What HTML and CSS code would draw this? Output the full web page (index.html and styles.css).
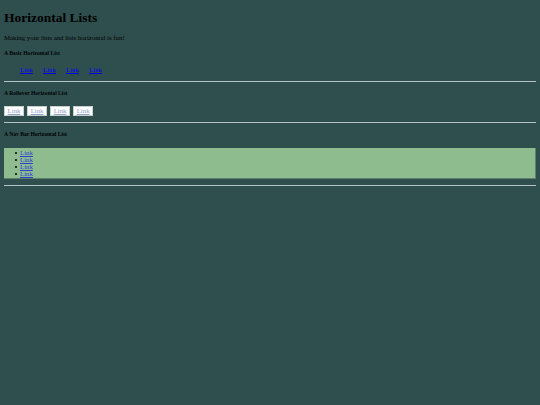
FILE: index.html
```html
<!DOCTYPE html>
<html>
<head>
<meta charset="utf-8">
<link rel="stylesheet" href="styles.css">
</head>
<body>
<div class="page">
  <h1 class="title">Horizontal Lists</h1>
  <p class="intro">Making your lists and lists horizontal is fun!</p>
  <h6 class="sub">A Basic Horizontal List</h6>
  <ul class="basic">
    <li><a href="#">Link</a></li>
    <li><a href="#">Link</a></li>
    <li><a href="#">Link</a></li>
    <li><a href="#">Link</a></li>
  </ul>
  <hr class="rule">
  <h6 class="sub">A Rollover Horizontal List</h6>
  <ul class="rollover">
    <li><a href="#">Link</a></li>
    <li><a href="#">Link</a></li>
    <li><a href="#">Link</a></li>
    <li><a href="#">Link</a></li>
  </ul>
  <hr class="rule rule-tight">
  <h6 class="sub">A Nav Bar Horizontal List</h6>
  <ul class="navbar">
    <li><a href="#">Link</a></li>
    <li><a href="#">Link</a></li>
    <li><a href="#">Link</a></li>
    <li><a href="#">Link</a></li>
  </ul>
  <hr class="rule rule-tight">
</div>
</body>
</html>
```

FILE: styles.css
```css
html, body {
  margin: 0;
  padding: 0;
  background: #2f4f4f;
}
body {
  font-family: "Liberation Serif", "Times New Roman", serif;
  color: #000;
}
.page {
  padding: 0 4px;
  display: flex;
  flex-direction: column;
}
.title {
  font-size: 13.5px;
  line-height: 16px;
  margin: 10px 0 0;
  font-weight: bold;
}
.intro {
  font-size: 6.8px;
  line-height: 8px;
  margin: 8px 0 0;
}
.sub {
  font-size: 5.6px;
  line-height: 6px;
  margin: 8px 0 0;
  font-weight: bold;
}
.basic {
  list-style: none;
  margin: 10px 0 0;
  padding: 0 0 0 16px;
  display: flex;
  gap: 10.2px;
  font-size: 6.8px;
  line-height: 8px;
}
.basic a { color: #0000ee; }
.rule {
  margin: 7px 0 0;
  border: 0;
  height: 1px;
  background: #b4c4c4;
}
.rule-tight {
  margin-top: 6px;
}
.rollover {
  list-style: none;
  margin: 10px 0 0;
  padding: 0;
  display: flex;
  gap: 3px;
  font-size: 6.8px;
  line-height: 8px;
}
.rollover a {
  display: block;
  background: #fff;
  color: #8fa0c8;
  border: 1px solid #c8d0d0;
  padding: 0 2.6px;
}
.navbar {
  list-style: none;
  margin: 11px 0 0;
  padding: 0.5px 0 0.5px 11px;
  background: #8fbc8f;
  font-size: 6.8px;
  line-height: 7.25px;
  border-right: 1px solid #5f7f6f;
  border-bottom: 1px solid #5f7f6f;
}
.navbar li::before {
  content: "";
  display: inline-block;
  width: 2px;
  height: 2px;
  border-radius: 50%;
  background: #000;
  margin-right: 3px;
  vertical-align: 1px;
}
.navbar a { color: #2a3fd0; }
```
